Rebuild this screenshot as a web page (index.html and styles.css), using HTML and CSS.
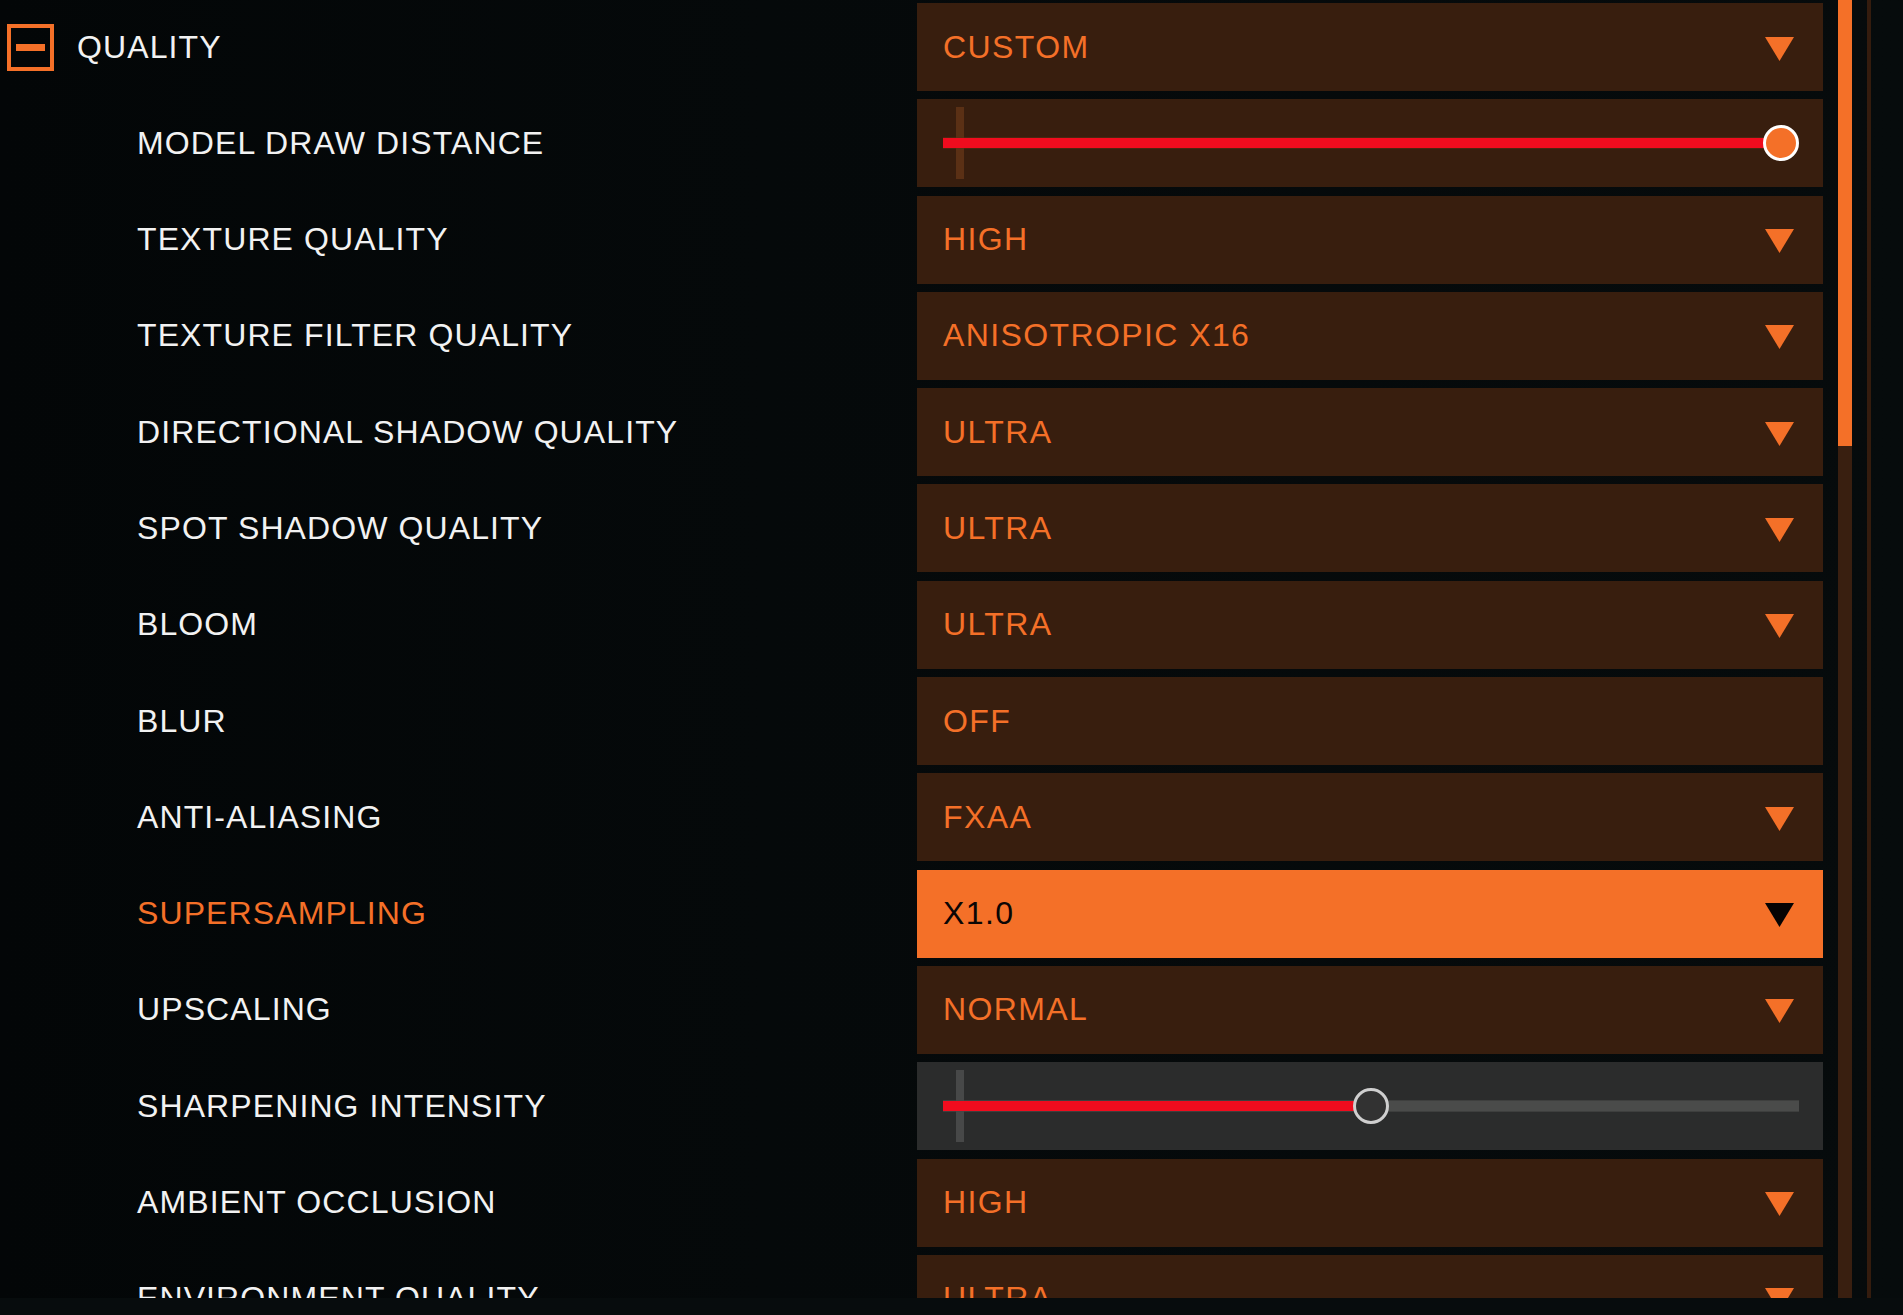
FILE: index.html
```html
<!DOCTYPE html>
<html>
<head>
<meta charset="utf-8">
<link rel="stylesheet" href="styles.css">
</head>
<body>
<div class="screen">
  <div class="viewport">
    <div class="list">
      <div class="row">
        <div class="label header"><span class="toggle"><span class="minus"></span></span><span>QUALITY</span></div>
        <div class="box dropdown"><span class="value">CUSTOM</span><svg class="arrow" viewBox="0 0 29 24"><polygon points="0,0 29,0 14.5,24"/></svg></div>
      </div>
      <div class="row">
        <div class="label">MODEL DRAW DISTANCE</div>
        <div class="box slider"><div class="track"><span class="tick"></span><span class="fill" style="width: calc(100% - 18px)"></span><span class="thumb" style="left: calc(100% - 36px)"></span></div></div>
      </div>
      <div class="row">
        <div class="label">TEXTURE QUALITY</div>
        <div class="box dropdown"><span class="value">HIGH</span><svg class="arrow" viewBox="0 0 29 24"><polygon points="0,0 29,0 14.5,24"/></svg></div>
      </div>
      <div class="row">
        <div class="label">TEXTURE FILTER QUALITY</div>
        <div class="box dropdown"><span class="value">ANISOTROPIC X16</span><svg class="arrow" viewBox="0 0 29 24"><polygon points="0,0 29,0 14.5,24"/></svg></div>
      </div>
      <div class="row">
        <div class="label">DIRECTIONAL SHADOW QUALITY</div>
        <div class="box dropdown"><span class="value">ULTRA</span><svg class="arrow" viewBox="0 0 29 24"><polygon points="0,0 29,0 14.5,24"/></svg></div>
      </div>
      <div class="row">
        <div class="label">SPOT SHADOW QUALITY</div>
        <div class="box dropdown"><span class="value">ULTRA</span><svg class="arrow" viewBox="0 0 29 24"><polygon points="0,0 29,0 14.5,24"/></svg></div>
      </div>
      <div class="row">
        <div class="label">BLOOM</div>
        <div class="box dropdown"><span class="value">ULTRA</span><svg class="arrow" viewBox="0 0 29 24"><polygon points="0,0 29,0 14.5,24"/></svg></div>
      </div>
      <div class="row">
        <div class="label">BLUR</div>
        <div class="box dropdown"><span class="value">OFF</span></div>
      </div>
      <div class="row">
        <div class="label">ANTI-ALIASING</div>
        <div class="box dropdown"><span class="value">FXAA</span><svg class="arrow" viewBox="0 0 29 24"><polygon points="0,0 29,0 14.5,24"/></svg></div>
      </div>
      <div class="row active">
        <div class="label">SUPERSAMPLING</div>
        <div class="box dropdown"><span class="value">X1.0</span><svg class="arrow" viewBox="0 0 29 24"><polygon points="0,0 29,0 14.5,24"/></svg></div>
      </div>
      <div class="row">
        <div class="label">UPSCALING</div>
        <div class="box dropdown"><span class="value">NORMAL</span><svg class="arrow" viewBox="0 0 29 24"><polygon points="0,0 29,0 14.5,24"/></svg></div>
      </div>
      <div class="row">
        <div class="label">SHARPENING INTENSITY</div>
        <div class="box slider grey"><div class="track"><span class="tick"></span><span class="fill" style="width: calc(50% + 0px)"></span><span class="thumb" style="left: calc(50% - 18px)"></span></div></div>
      </div>
      <div class="row">
        <div class="label">AMBIENT OCCLUSION</div>
        <div class="box dropdown"><span class="value">HIGH</span><svg class="arrow" viewBox="0 0 29 24"><polygon points="0,0 29,0 14.5,24"/></svg></div>
      </div>
      <div class="row">
        <div class="label">ENVIRONMENT QUALITY</div>
        <div class="box dropdown"><span class="value">ULTRA</span><svg class="arrow" viewBox="0 0 29 24"><polygon points="0,0 29,0 14.5,24"/></svg></div>
      </div>
    </div>
    <div class="scrollbar"><div class="scroll-thumb"></div></div>
    <div class="edge"></div>
  </div>
</div>
</body>
</html>
```
FILE: styles.css
```css
html, body {
  margin: 0;
  padding: 0;
  background: #04080a;
}
body {
  width: 1903px;
  height: 1315px;
  overflow: hidden;
  font-family: "Liberation Sans", Arial, sans-serif;
}
.screen {
  width: 1903px;
  height: 1315px;
  background: #070c0d;
}
.viewport {
  height: 1298px;
  overflow: hidden;
  display: flex;
  background: linear-gradient(90deg, #030607 0%, #05090a 40%, #060b0c 100%);
}
.list {
  width: 1823px;
  padding-top: 3px;
  display: flex;
  flex-direction: column;
  gap: 8.3px;
}
.row {
  display: flex;
  height: 88px;
  flex-shrink: 0;
}
.label {
  width: 917px;
  flex-shrink: 0;
  box-sizing: border-box;
  padding-left: 137px;
  display: flex;
  align-items: center;
  color: #f2f2f2;
  font-size: 32px;
  letter-spacing: 1.1px;
  white-space: nowrap;
}
.label.header {
  padding-left: 7px;
}
.toggle {
  width: 47px;
  height: 47px;
  box-sizing: border-box;
  border: 4px solid #f47028;
  display: flex;
  align-items: center;
  justify-content: center;
  margin-right: 23px;
  margin-top: 1px;
}
.minus {
  width: 29px;
  height: 7px;
  background: #f47028;
}
.row.active .label {
  color: #f47028;
}
.box {
  width: 906px;
  height: 88px;
  background: #381e0e;
  box-sizing: border-box;
  display: flex;
  align-items: center;
}
.dropdown {
  padding-left: 26px;
  padding-right: 29px;
  justify-content: space-between;
}
.value {
  color: #f47028;
  font-size: 32px;
  letter-spacing: 1.4px;
  white-space: nowrap;
}
.arrow {
  width: 29px;
  height: 24px;
  fill: #f47028;
  margin-top: 3px;
}
.row.active .box {
  background: #f47028;
}
.row.active .value {
  color: #0a0605;
}
.row.active .arrow {
  fill: #050303;
}
.slider {
  padding-left: 26px;
  padding-right: 24px;
}
.track {
  position: relative;
  flex: 1;
  height: 12px;
  background: #4a2610;
}
.fill {
  position: absolute;
  left: 0;
  top: 1px;
  height: 10px;
  background: #f00c1e;
}
.tick {
  position: absolute;
  left: 13px;
  top: -30px;
  width: 8px;
  height: 72px;
  background: #5a3015;
}
.thumb {
  position: absolute;
  top: -12px;
  width: 36px;
  height: 36px;
  box-sizing: border-box;
  border-radius: 50%;
  border: 3px solid #ffffff;
  background: #f47028;
}
.slider.grey {
  background: #2b2c2c;
}
.slider.grey .track {
  background: #4a4b4a;
  box-shadow: inset 0 1px 0 #3e3f3e, inset 0 -1px 0 #3e3f3e;
}
.slider.grey .tick {
  background: #474848;
}
.slider.grey .thumb {
  background: #323232;
  border-color: #cfcfcf;
}
.scrollbar {
  margin-left: 15px;
  width: 14px;
  flex-shrink: 0;
  background: #391f10;
}
.scroll-thumb {
  height: 446px;
  background: #f47028;
}
.edge {
  margin-left: 15px;
  width: 4px;
  flex-shrink: 0;
  background: #341c0e;
}
```
